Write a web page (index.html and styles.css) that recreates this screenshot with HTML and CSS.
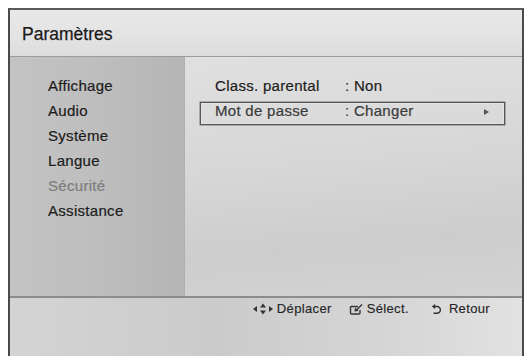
FILE: index.html
```html
<!DOCTYPE html>
<html lang="fr">
<head>
<meta charset="utf-8">
<title>Paramètres</title>
<link rel="stylesheet" href="styles.css">
</head>
<body>
<div class="frame">
  <div class="header"><span class="title">Paramètres</span></div>
  <div class="main">
    <ul class="menu">
      <li>Affichage</li>
      <li>Audio</li>
      <li>Système</li>
      <li>Langue</li>
      <li class="dim">Sécurité</li>
      <li>Assistance</li>
    </ul>
    <div class="content">
      <div class="row"><span class="label">Class. parental</span><span class="value">: Non</span></div>
      <div class="row selected"><span class="label">Mot de passe</span><span class="value">: Changer</span><span class="arrow"></span></div>
    </div>
  </div>
  <div class="footer">
    <span class="hint hint-move">
      <svg class="ico" width="22" height="12" viewBox="0 0 22 12"><path d="M1 6 L5 3 L5 9 Z" fill="#333"/><path d="M11 0.5 L14 4.5 L8 4.5 Z" fill="#333"/><path d="M11 11.5 L14 7.5 L8 7.5 Z" fill="#333"/><path d="M21 6 L17 3 L17 9 Z" fill="#333"/></svg>
      <span>Déplacer</span>
    </span>
    <span class="hint hint-select">
      <svg class="ico" width="14" height="12" viewBox="0 0 14 12"><path d="M1.5 4.5 Q1.5 3.5 2.5 3.5 H9 M1.5 4.5 V10 Q1.5 11 2.5 11 H10 Q11 11 11 10 V7" fill="none" stroke="#333" stroke-width="1.4"/><path d="M13 1.5 L7.5 7" stroke="#333" stroke-width="1.4"/><path d="M5.5 8.5 L6 4.5 L9.5 8 Z" fill="#333"/></svg>
      <span>Sélect.</span>
    </span>
    <span class="hint hint-back">
      <svg class="ico" width="11" height="12" viewBox="0 0 11 12"><path d="M4 3.5 H6 A3.4 3.4 0 1 1 6 10.3 H2.5" fill="none" stroke="#333" stroke-width="1.4"/><path d="M0.8 3.5 L4.2 1 L4.2 6 Z" fill="#333"/></svg>
      <span>Retour</span>
    </span>
  </div>
</div>
</body>
</html>
```
FILE: styles.css
```css
html, body {
  margin: 0;
  padding: 0;
  background: #ffffff;
}
body {
  padding: 8px;
  font-family: "Liberation Sans", Arial, sans-serif;
  color: #1c1c1c;
}
.frame {
  box-sizing: border-box;
  width: 516px;
  height: 348px;
  border: 2px solid #4a4a4a;
  border-top-color: #5a5a5a;
  display: flex;
  flex-direction: column;
  background: #d4d4d4;
}
.header {
  height: 47px;
  border-bottom: 1px solid #9c9c9c;
  background: linear-gradient(180deg, #e9e9e9 0%, #e3e3e3 60%, #dcdcdc 100%);
  padding: 14px 0 0 12px;
  box-sizing: border-box;
  flex: none;
}
.title {
  font-size: 17.5px;
  line-height: 20px;
  color: #1a1a1a;
  display: block;
  -webkit-text-stroke: 0.25px #1a1a1a;
}
.main {
  height: 239px;
  flex: none;
  display: flex;
}
.menu {
  list-style: none;
  margin: 0;
  width: 175px;
  flex: none;
  box-sizing: border-box;
  padding: 16px 0 0 38px;
  background: linear-gradient(90deg, #c3c3c3 0%, #bebebe 50%, #b5b5b5 100%);
  border-right: 1px solid #b0b0b0;
}
.menu li {
  font-size: 15px;
  letter-spacing: 0.3px;
  line-height: 25px;
  color: #1c1c1c;
  -webkit-text-stroke: 0.2px #1c1c1c;
}
.menu li.dim {
  color: #7c7c7c;
  -webkit-text-stroke: 0.2px #7c7c7c;
}
.content {
  flex: 1;
  padding: 20px 17px 0 15px;
  background: linear-gradient(175deg, #e0e0e0 0%, #d8d8d8 40%, #cdcdcd 75%, #d3d3d3 100%);
}
.row {
  display: flex;
  align-items: flex-start;
  height: 25px;
  box-sizing: border-box;
  border: 1px solid transparent;
  padding: 0 0 0 14px;
  font-size: 15px;
  letter-spacing: 0.3px;
  line-height: 16px;
  -webkit-text-stroke: 0.2px currentColor;
}
.row .label {
  width: 130px;
  flex: none;
}
.row .value {
  flex: 1;
}
.row.selected {
  height: 23px;
  border: 1px solid #555;
  box-shadow: inset 0 0 0 1px #e4e4e4, 0 0 0 0.5px #777;
  color: #3a3a3a;
}
.arrow {
  width: 0;
  height: 0;
  border-left: 5px solid #555;
  border-top: 3px solid transparent;
  border-bottom: 3px solid transparent;
  margin: 6px 15px 0 0;
}
.footer {
  height: 55px;
  flex: none;
  border-top: 2px solid #8c8c8c;
  background: linear-gradient(90deg, #d4d4d4 0%, #cbcbcb 40%, #d6d6d6 75%, #e2e2e2 100%);
  display: flex;
  justify-content: flex-end;
  align-items: flex-start;
  padding: 3px 32px 0 0;
}
.hint {
  display: flex;
  align-items: center;
  font-size: 13px;
  letter-spacing: 0.35px;
  line-height: 16px;
  color: #262626;
  -webkit-text-stroke: 0.15px #262626;
}
.ico {
  flex: none;
  display: block;
}
.hint-move .ico { margin-right: 3px; }
.hint-select { margin-left: 17px; }
.hint-select .ico { margin-right: 4px; }
.hint-back { margin-left: 22px; }
.hint-back .ico { margin-right: 7px; }
```
